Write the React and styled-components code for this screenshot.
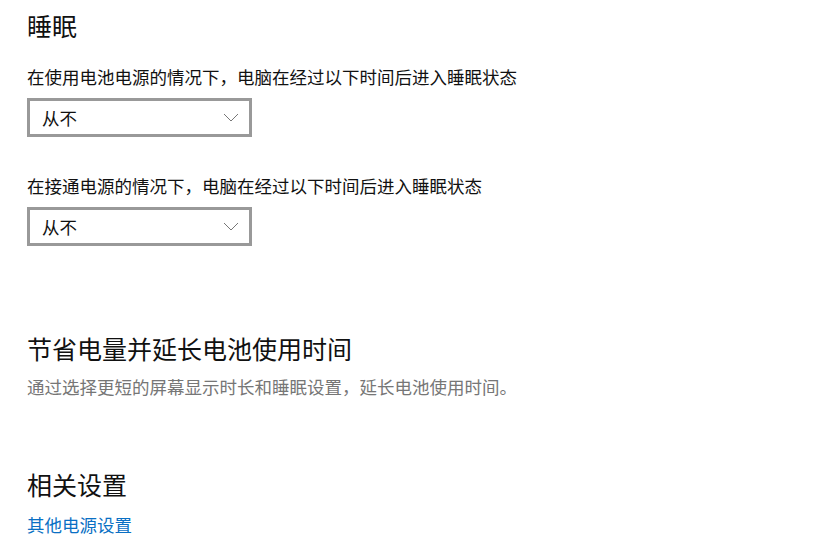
import React from 'react';
import styled, { createGlobalStyle } from 'styled-components';

const GlobalStyle = createGlobalStyle`
  html, body {
    margin: 0;
    padding: 0;
    background: #fff;
  }
  body {
    font-family: 'Noto Sans CJK SC', 'Noto Sans', sans-serif;
    color: #000;
  }
`;

const Page = styled.div`
  display: flex;
  flex-direction: column;
  align-items: flex-start;
  padding: 8px 0 0 27px;
  width: 816px;
  height: 544px;
  box-sizing: border-box;
  overflow: hidden;
`;

const SectionTitle = styled.h2`
  margin: ${(p) => p.$top || 0}px 0 0;
  font-size: 25px;
  font-weight: 400;
  line-height: 34px;
  color: #111;
`;

const Label = styled.div`
  margin-top: ${(p) => p.$top || 0}px;
  font-size: 17.5px;
  line-height: 26px;
  color: ${(p) => (p.$muted ? '#767676' : '#111')};
`;

const Select = styled.button`
  display: flex;
  align-items: center;
  justify-content: space-between;
  margin-top: 8px;
  width: 225px;
  height: 39px;
  padding: 0 10px 0 12px;
  box-sizing: border-box;
  border: 3px solid #999;
  background: #fff;
  font-family: inherit;
  font-size: 17.5px;
  color: #111;
  cursor: pointer;
`;

const Chevron = () => (
  <svg width="16" height="9" viewBox="0 0 16 9" fill="none">
    <path d="M1 1l7 7 7-7" stroke="#777" strokeWidth="1" />
  </svg>
);

const Link = styled.a`
  margin-top: 11px;
  font-size: 17.5px;
  line-height: 26px;
  color: #0a70c4;
  text-decoration: none;
  cursor: pointer;
`;

const Dropdown = ({ value }) => (
  <Select>
    <span>{value}</span>
    <Chevron />
  </Select>
);

export default function App() {
  return (
    <>
      <GlobalStyle />
      <Page>
        <SectionTitle>睡眠</SectionTitle>
        <Label $top={22}>在使用电池电源的情况下，电脑在经过以下时间后进入睡眠状态</Label>
        <Dropdown value="从不" />
        <Label $top={36}>在接通电源的情况下，电脑在经过以下时间后进入睡眠状态</Label>
        <Dropdown value="从不" />

        <SectionTitle $top={85}>节省电量并延长电池使用时间</SectionTitle>
        <Label $top={9} $muted>
          通过选择更短的屏幕显示时长和睡眠设置，延长电池使用时间。
        </Label>

        <SectionTitle $top={67}>相关设置</SectionTitle>
        <Link>其他电源设置</Link>
      </Page>
    </>
  );
}
